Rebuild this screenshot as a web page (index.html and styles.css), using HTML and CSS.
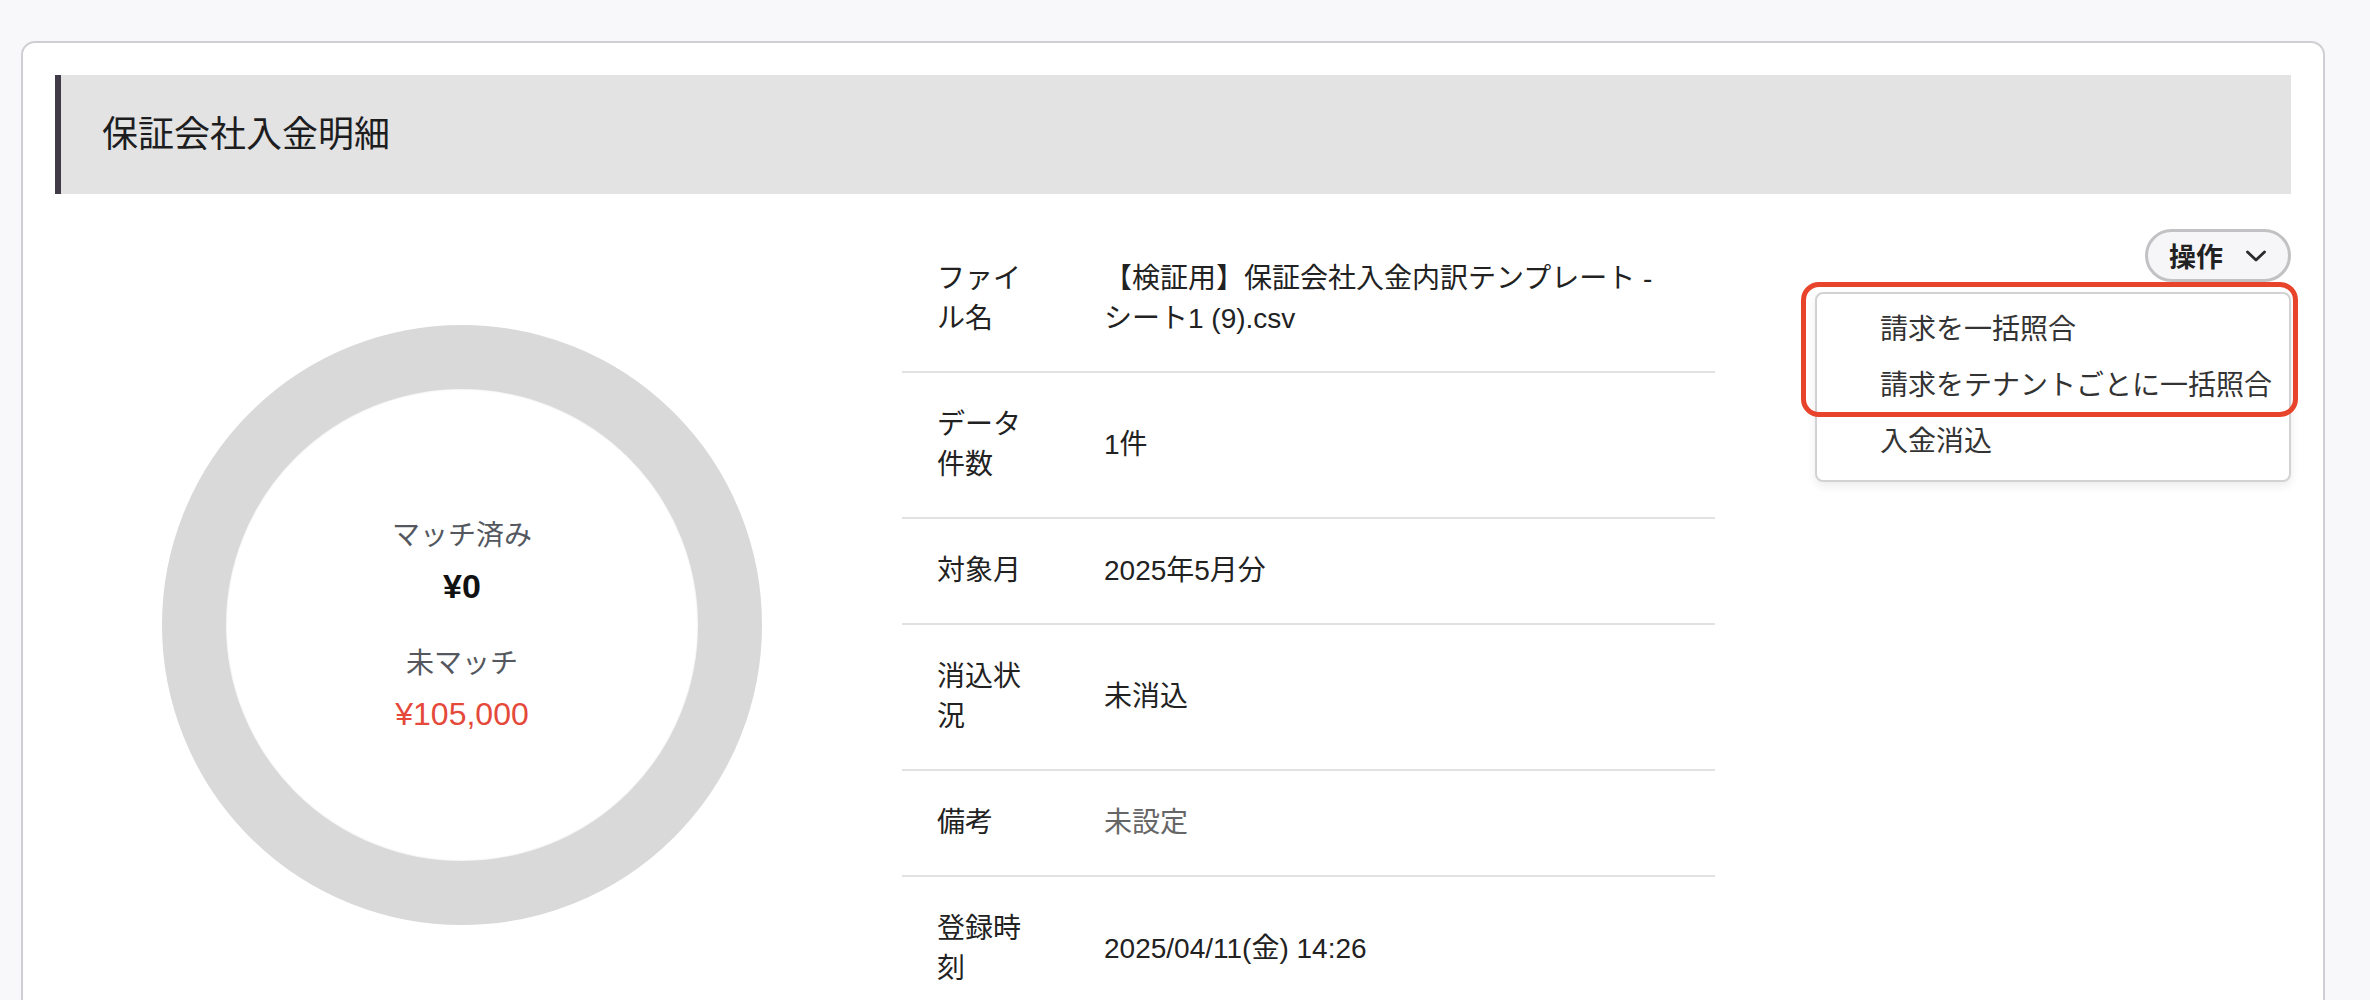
FILE: index.html
```html
<!DOCTYPE html>
<html lang="ja">

<head>
    <meta charset="UTF-8">
    <title>保証会社入金明細</title>
    <link rel="stylesheet" href="styles.css">
</head>

<body>

    <section class="card">
        <h1 class="card-title">保証会社入金明細</h1>

        <div class="detail">

            <div class="chart-col">
                <div class="donut">
                    <div class="donut-text">
                        <p class="donut-label">マッチ済み</p>
                        <p class="donut-amount">¥0</p>
                        <p class="donut-label next">未マッチ</p>
                        <p class="donut-amount unmatched">¥105,000</p>
                    </div>
                </div>
            </div>

            <table class="info">
                <tr>
                    <th>ファイル名</th>
                    <td>【検証用】保証会社入金内訳テンプレート - シート1 (9).csv</td>
                </tr>
                <tr>
                    <th>データ件数</th>
                    <td>1件</td>
                </tr>
                <tr>
                    <th>対象月</th>
                    <td>2025年5月分</td>
                </tr>
                <tr>
                    <th>消込状況</th>
                    <td>未消込</td>
                </tr>
                <tr>
                    <th>備考</th>
                    <td class="empty">未設定</td>
                </tr>
                <tr>
                    <th>登録時刻</th>
                    <td>2025/04/11(金) 14:26</td>
                </tr>
            </table>

            <div class="actions">
                <button class="action-btn">操作
                    <svg width="22" height="14" viewBox="0 0 22 14">
                        <path d="M2.5 3 L11 11 L19.5 3" fill="none" stroke="#2a2a2a" stroke-width="2.8" stroke-linecap="round" stroke-linejoin="round" />
                    </svg>
                </button>
                <ul class="action-menu">
                    <li>請求を一括照合</li>
                    <li>請求をテナントごとに一括照合</li>
                    <li>入金消込</li>
                </ul>
                <div class="highlight"></div>
            </div>

        </div>
    </section>

</body></html>
```

FILE: styles.css
```css
body {
    margin: 0;
    background-color: #f8f8fa;
    font-family: "Liberation Sans", "Noto Sans CJK JP", sans-serif;
    font-size: 28px;
    line-height: 40px;
    color: #222;
}

.card {
    margin: 41px 45px 0 21px;
    padding: 32px;
    min-height: 1100px;
    background-color: white;
    border: 2px solid #cfcfd3;
    border-radius: 14px;
}

.card-title {
    display: flex;
    align-items: center;
    height: 119px;
    margin: 0 0 33px 0;
    padding: 0 41px;
    background-color: #e3e3e3;
    border-left: 6px solid #403b46;
    font-size: 36px;
    font-weight: normal;
    color: #1d1d1f;
}

.detail {
    display: flex;
    align-items: flex-start;
    gap: 33px;
}

.chart-col {
    width: 814px;
    display: flex;
    justify-content: center;
}

.donut {
    width: 600px;
    height: 600px;
    margin-top: 98px;
    box-sizing: border-box;
    border: 64px solid #d9d9d9;
    border-radius: 50%;
    box-shadow: inset 0 0 2px rgba(0, 0, 0, .12);
    display: flex;
    align-items: center;
    justify-content: center;
    text-align: center;
}

.donut-text {
    padding-top: 6px;
}

.donut-text p {
    margin: 0;
}

.donut-label {
    line-height: 44px;
    color: #54585e;
}

.donut-label.next {
    margin-top: 28px;
}

.donut-amount {
    font-size: 34px;
    line-height: 56px;
    font-weight: bold;
    color: #111;
}

.donut-amount.unmatched {
    font-size: 32px;
    font-weight: normal;
    color: #e5493a;
}

.info {
    width: 813px;
    border-collapse: collapse;
}

.info tr {
    border-bottom: 2px solid #e2e2e2;
}

.info th {
    width: 202px;
    box-sizing: border-box;
    padding: 32px 77px 32px 35px;
    text-align: left;
    font-weight: normal;
    vertical-align: middle;
}

.info td {
    padding: 32px 54px 32px 0;
    vertical-align: middle;
}

.info .empty {
    color: #666;
}

.actions {
    flex: 1;
    position: relative;
    display: flex;
    justify-content: flex-end;
}

.action-btn {
    display: flex;
    align-items: center;
    gap: 22px;
    height: 53px;
    margin-top: 2px;
    padding: 0 21px 0 21px;
    background-color: #f6f6f8;
    border: 3px solid #c2c2c4;
    border-radius: 27px;
    font-family: inherit;
    font-size: 27px;
    font-weight: bold;
    color: #222;
    cursor: pointer;
}

.action-menu {
    position: absolute;
    top: 65px;
    right: 0;
    width: 476px;
    box-sizing: border-box;
    margin: 0;
    padding: 8px 0 10px 0;
    list-style: none;
    background-color: white;
    border: 2px solid #d2d2d4;
    border-radius: 8px;
    box-shadow: 0 4px 10px rgba(0, 0, 0, .08);
}

.action-menu li {
    height: 56px;
    line-height: 56px;
    padding-left: 63px;
    color: #333;
}

.highlight {
    position: absolute;
    top: 55px;
    right: -7px;
    width: 497px;
    height: 135px;
    box-sizing: border-box;
    border: 5px solid #e8432b;
    border-radius: 18px;
}
```
